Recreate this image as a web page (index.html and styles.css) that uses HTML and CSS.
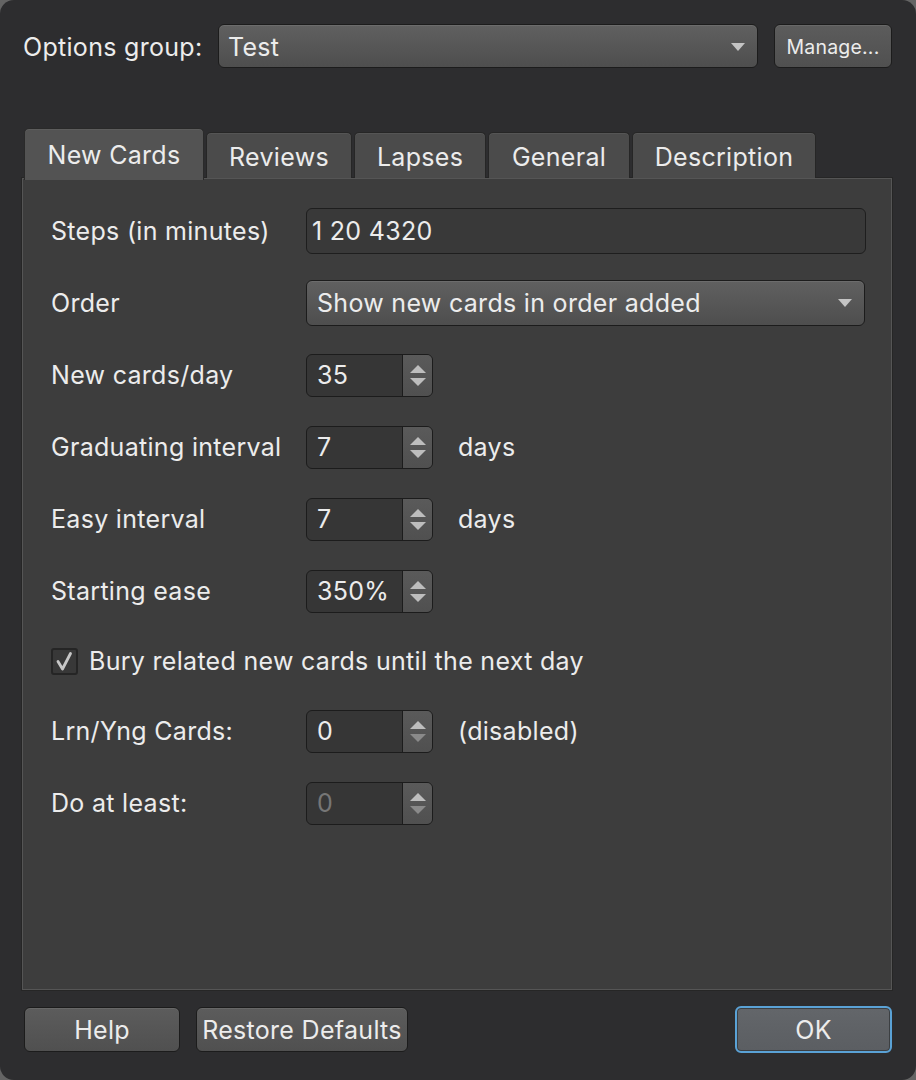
FILE: index.html
```html
<!DOCTYPE html>
<html>
<head>
<meta charset="utf-8">
<link rel="stylesheet" href="styles.css">
</head>
<body>
<div class="window">
  <div class="top-row">
    <span class="top-label">Options group:</span>
    <div class="combo top-combo"><span>Test</span><span class="arrow"></span></div>
    <button class="btn manage">Manage...</button>
  </div>

  <div class="tabs">
    <div class="tab active">New Cards</div>
    <div class="tab">Reviews</div>
    <div class="tab">Lapses</div>
    <div class="tab">General</div>
    <div class="tab">Description</div>
  </div>

  <div class="pane">
    <div class="row">
      <span class="label">Steps (in minutes)</span>
      <div class="lineedit">1 20 4320</div>
    </div>
    <div class="row">
      <span class="label">Order</span>
      <div class="combo order-combo"><span>Show new cards in order added</span><span class="arrow"></span></div>
    </div>
    <div class="row">
      <span class="label">New cards/day</span>
      <div class="spin"><span class="val">35</span><span class="spin-btn"><i class="up"></i><i class="down"></i></span></div>
    </div>
    <div class="row">
      <span class="label">Graduating interval</span>
      <div class="spin"><span class="val">7</span><span class="spin-btn"><i class="up"></i><i class="down"></i></span></div>
      <span class="suffix">days</span>
    </div>
    <div class="row">
      <span class="label">Easy interval</span>
      <div class="spin"><span class="val">7</span><span class="spin-btn"><i class="up"></i><i class="down"></i></span></div>
      <span class="suffix">days</span>
    </div>
    <div class="row">
      <span class="label">Starting ease</span>
      <div class="spin"><span class="val">350%</span><span class="spin-btn"><i class="up"></i><i class="down"></i></span></div>
    </div>
    <div class="row check-row">
      <span class="checkbox">
        <svg width="23" height="23" viewBox="0 0 23 23"><path d="M5 11.5 L9.5 19 L17.5 3.5" fill="none" stroke="#c6c6c6" stroke-width="2.8" stroke-linecap="round" stroke-linejoin="round"/></svg>
      </span>
      <span class="check-text">Bury related new cards until the next day</span>
    </div>
    <div class="row">
      <span class="label">Lrn/Yng Cards:</span>
      <div class="spin"><span class="val">0</span><span class="spin-btn"><i class="up"></i><i class="down dim"></i></span></div>
      <span class="suffix">(disabled)</span>
    </div>
    <div class="row">
      <span class="label">Do at least:</span>
      <div class="spin disabled"><span class="val">0</span><span class="spin-btn"><i class="up"></i><i class="down dim"></i></span></div>
    </div>
  </div>

  <div class="bottom-row">
    <button class="btn big help">Help</button>
    <button class="btn big restore">Restore Defaults</button>
    <span class="spacer"></span>
    <button class="btn big ok">OK</button>
  </div>
</div>
</body>
</html>
```
FILE: styles.css
```css
* { box-sizing: border-box; }
html, body { margin: 0; padding: 0; }
body {
  background: #646464;
  width: 916px;
  height: 1080px;
  overflow: hidden;
  font-family: Inter, "Noto Sans", sans-serif;
  font-size: 25px;
  letter-spacing: 0.3px;
  color: #ececec;
}
.window {
  width: 916px;
  height: 1080px;
  background: #2d2d2f;
  border-radius: 14px;
  display: flex;
  flex-direction: column;
}
.top-row {
  display: flex;
  align-items: center;
  padding: 24px 24px 0 23px;
  height: 68px;
}
.top-label {
  width: 195px;
  flex: none;
  padding-top: 2px;
}
.combo {
  display: flex;
  align-items: center;
  justify-content: space-between;
  border: 1px solid #1c1c1c;
  border-radius: 6px;
  background: linear-gradient(#606060, #4e4e4e);
  box-shadow: inset 0 1px 0 rgba(255,255,255,0.08);
}
.top-combo {
  flex: 1;
  height: 44px;
  padding: 2px 12px 0 9px;
}
.arrow {
  width: 0; height: 0;
  border-left: 7px solid transparent;
  border-right: 7px solid transparent;
  border-top: 8px solid #c4c4c4;
}
.btn {
  font-family: Inter, "Noto Sans", sans-serif;
  letter-spacing: 0.3px;
  color: #ececec;
  border: 1px solid #1c1c1c;
  border-radius: 6px;
  background: linear-gradient(#5c5c5c, #505050);
  box-shadow: inset 0 1px 0 rgba(255,255,255,0.08);
  padding: 0;
}
.manage {
  margin-left: 16px;
  width: 118px;
  height: 44px;
  font-size: 19.5px;
  letter-spacing: 0.2px;
  padding-top: 2px;
}
.tabs {
  display: flex;
  align-items: flex-end;
  margin-top: 60px;
  padding-left: 24px;
  height: 52px;
  position: relative;
  z-index: 2;
  gap: 2px;
}
.tab {
  height: 46px;
  margin-bottom: 2px;
  padding: 3px 0 0 0;
  display: flex;
  align-items: center;
  justify-content: center;
  background: #4b4b4b;
  border: 1px solid #262626;
  border-bottom: none;
  border-radius: 5px 5px 0 0;
  box-shadow: inset 0 1px 0 rgba(255,255,255,0.06);
}
.tab.active {
  height: 52px;
  margin-bottom: 0;
  background: #535353;
  border-color: #2a2a2a;
  padding: 2px 0 2px 0;
}
.tab:nth-child(1) { width: 180px; }
.tab:nth-child(2) { width: 146px; }
.tab:nth-child(3) { width: 132px; }
.tab:nth-child(4) { width: 142px; }
.tab:nth-child(5) { width: 184px; }
.pane {
  margin: -2px 24px 0 22px;
  height: 812px;
  background: #3d3d3d;
  border: 1px solid #555555;
  box-shadow: 0 0 0 1px #262626;
  padding: 16px 0 0 28px;
  display: flex;
  flex-direction: column;
}
.row {
  height: 72px;
  display: flex;
  align-items: center;
  flex: none;
}
.row.check-row { height: 68px; }
.label {
  width: 255px;
  flex: none;
}
.lineedit {
  width: 560px;
  height: 46px;
  border: 1px solid #1e1e1e;
  border-radius: 6px;
  background: #393939;
  display: flex;
  align-items: center;
  padding-left: 5px;
}
.order-combo {
  width: 559px;
  height: 46px;
  padding: 0 12px 0 10px;
}
.spin {
  width: 127px;
  height: 43px;
  border: 1px solid #1c1c1c;
  border-radius: 6px;
  background: #363636;
  display: flex;
  overflow: hidden;
}
.spin .val {
  flex: 1;
  display: flex;
  align-items: center;
  padding-left: 10px;
  border-right: 1px solid #1c1c1c;
}
.spin.disabled .val { color: #767676; }
.spin-btn {
  width: 29px;
  background: linear-gradient(#5a5a5a, #505050);
  display: flex;
  flex-direction: column;
  align-items: center;
  justify-content: center;
  gap: 5px;
}
.spin-btn i {
  width: 0; height: 0;
  border-left: 8px solid transparent;
  border-right: 8px solid transparent;
}
.spin-btn .up { border-bottom: 8px solid #bdbdbd; }
.spin-btn .down { border-top: 8px solid #bdbdbd; }
.spin-btn .down.dim { border-top-color: #8a8a8a; }
.suffix {
  margin-left: 25px;
}
.checkbox {
  width: 27px;
  height: 27px;
  border: 2px solid #252525;
  border-radius: 3px;
  background: #383838;
  display: flex;
  align-items: center;
  justify-content: center;
  flex: none;
}
.checkbox svg { display: block; }
.check-text {
  margin-left: 11px;
}
.bottom-row {
  display: flex;
  align-items: center;
  padding: 16px 24px 0 24px;
}
.btn.big {
  height: 45px;
  font-size: 25px;
}
.help { width: 156px; }
.restore { width: 212px; margin-left: 16px; }
.spacer { flex: 1; }
.ok {
  width: 157px;
  height: 47px !important;
  background: linear-gradient(#63666a, #5b5e62);
  border: 2px solid #5aa2d6;
  box-shadow: inset 0 0 0 1px #3c3f42;
}
```
